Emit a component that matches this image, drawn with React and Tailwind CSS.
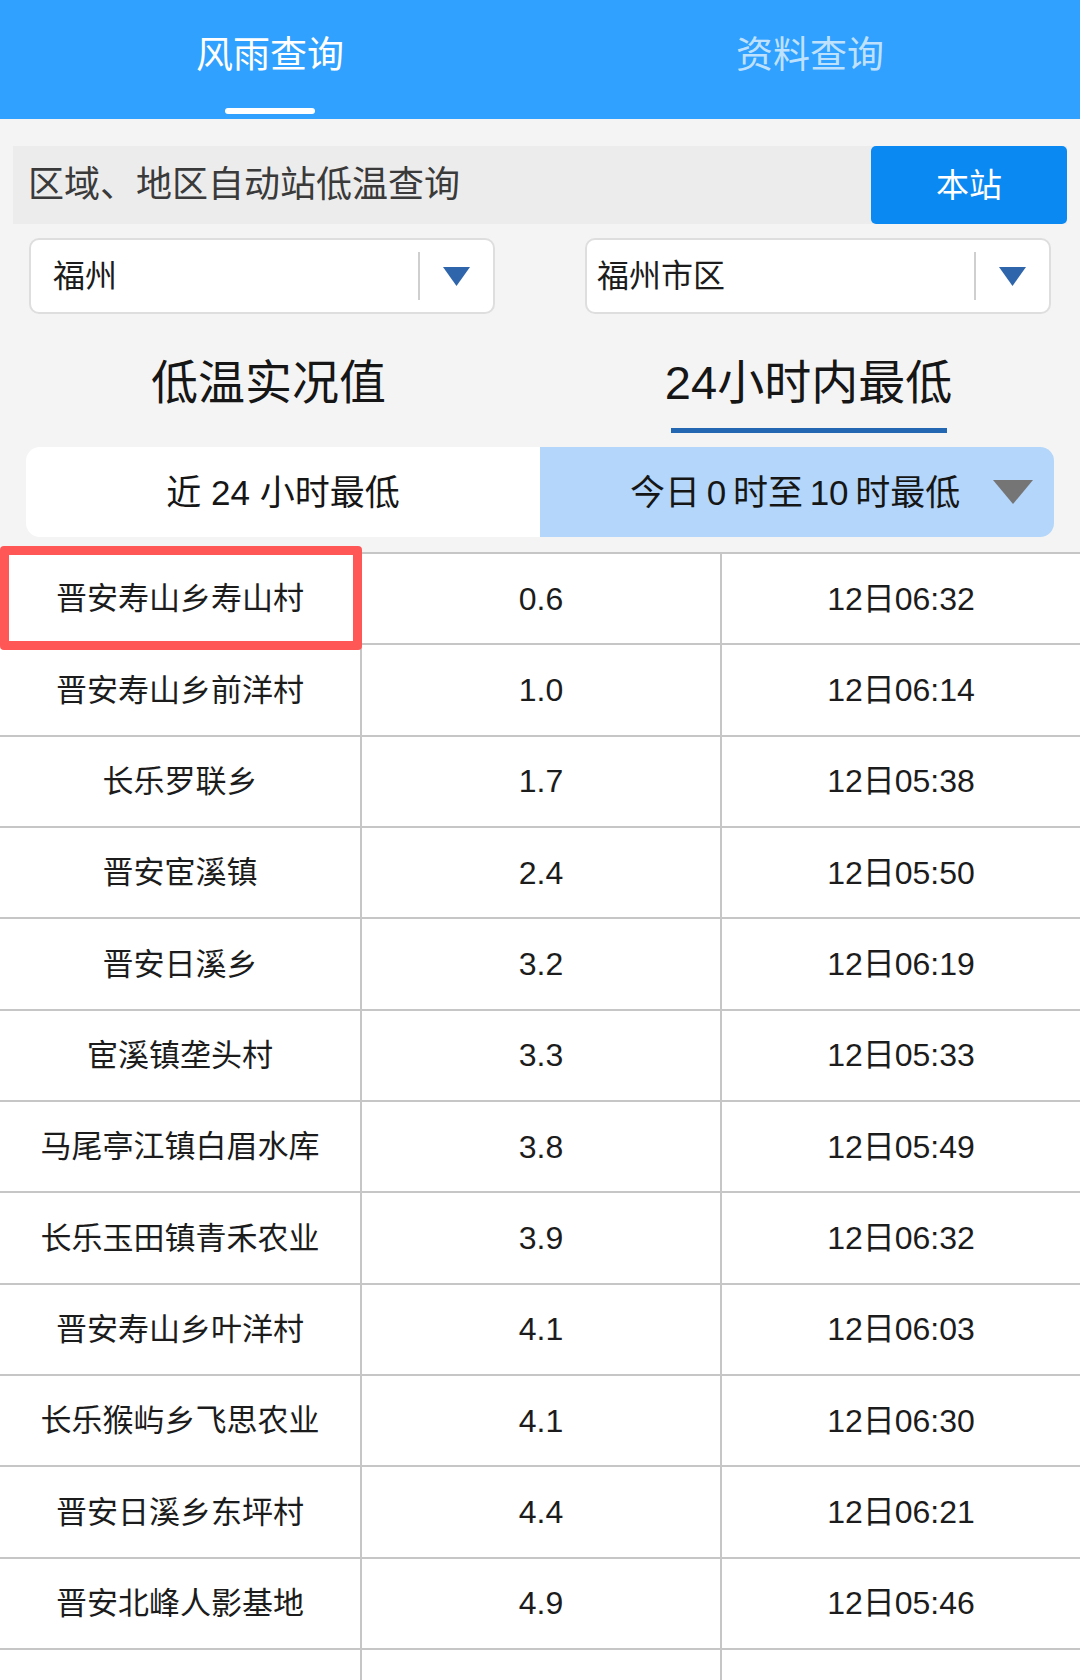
import React from "react";

const rows = [
  ["晋安寿山乡寿山村", "0.6", "12日06:32"],
  ["晋安寿山乡前洋村", "1.0", "12日06:14"],
  ["长乐罗联乡", "1.7", "12日05:38"],
  ["晋安宦溪镇", "2.4", "12日05:50"],
  ["晋安日溪乡", "3.2", "12日06:19"],
  ["宦溪镇垄头村", "3.3", "12日05:33"],
  ["马尾亭江镇白眉水库", "3.8", "12日05:49"],
  ["长乐玉田镇青禾农业", "3.9", "12日06:32"],
  ["晋安寿山乡叶洋村", "4.1", "12日06:03"],
  ["长乐猴屿乡飞思农业", "4.1", "12日06:30"],
  ["晋安日溪乡东坪村", "4.4", "12日06:21"],
  ["晋安北峰人影基地", "4.9", "12日05:46"],
  ["", "", ""],
];

function Dropdown({ label, pad }) {
  return (
    <div className="w-[466px] h-[76px] bg-white border-2 border-[#dedede] rounded-[10px] flex items-center">
      <div className={`flex-1 ${pad} text-[32px] leading-none text-[#1c1c1c]`}>{label}</div>
      <div className="w-[2px] h-[48px] bg-[#cfcfcf]" />
      <div className="w-[73px] flex items-center justify-center">
        <svg width="27" height="19" viewBox="0 0 27 19">
          <polygon points="0,0 27,0 13.5,19" fill="#2f65ab" />
        </svg>
      </div>
    </div>
  );
}

export default function App() {
  return (
    <div className="w-[1080px] h-[1680px] overflow-hidden bg-[#f4f4f4] font-['Liberation_Sans','Noto_Sans_CJK_SC',sans-serif]">
      {/* Header tabs */}
      <div className="h-[119px] bg-[#30a1fe] flex">
        <div className="flex-1 relative flex justify-center pt-[37px]">
          <span className="text-[37px] leading-none text-white">风雨查询</span>
          <div className="absolute bottom-[5px] left-1/2 -translate-x-1/2 w-[90px] h-[6px] rounded-full bg-white" />
        </div>
        <div className="flex-1 flex justify-center pt-[37px]">
          <span className="text-[37px] leading-none text-white/70">资料查询</span>
        </div>
      </div>

      {/* Search bar */}
      <div className="mt-[27px] mx-[13px] h-[78px] bg-[#ececec] flex items-stretch">
        <div className="flex-1 flex items-center pl-[15px] text-[36px] leading-none text-[#3a3a3a]">
          区域、地区自动站低温查询
        </div>
        <div className="w-[196px] bg-[#0a89f2] rounded-[5px] flex items-center justify-center text-white text-[33px] leading-none">
          本站
        </div>
      </div>

      {/* Dropdowns */}
      <div className="mt-[14px] px-[29px] flex justify-between">
        <Dropdown label="福州" pad="pl-[22px]" />
        <Dropdown label="福州市区" pad="pl-[10px]" />
      </div>

      {/* Title tabs */}
      <div className="h-[133px] flex">
        <div className="w-[537px] flex justify-center pt-[45px]">
          <span className="text-[47px] leading-none text-[#161616]">低温实况值</span>
        </div>
        <div className="flex-1 relative flex justify-center pt-[45px]">
          <span className="text-[47px] leading-none text-[#161616]">24小时内最低</span>
          <div className="absolute top-[114px] left-1/2 -translate-x-1/2 w-[276px] h-[5px] bg-[#2366b1]" />
        </div>
      </div>

      {/* Segment */}
      <div className="mx-[26px] h-[90px] rounded-[14px] overflow-hidden flex">
        <div className="w-[514px] bg-white flex items-center justify-center text-[35px] leading-none text-[#161616]">
          近 24 小时最低
        </div>
        <div className="flex-1 bg-[#b3d6fa] flex items-center pl-[90px] pr-[21px]">
          <span className="text-[35px] leading-none text-[#161616] [word-spacing:-3px]">今日 0 时至 10 时最低</span>
          <svg className="ml-auto" width="40" height="24" viewBox="0 0 40 24">
            <polygon points="0,0 40,0 20,24" fill="#757575" />
          </svg>
        </div>
      </div>

      {/* Table */}
      <div className="mt-[15px] relative border-t-2 border-[#c6c6c6]">
        {rows.map((r, i) => (
          <div key={i} className="h-[91.35px] flex border-b-2 border-[#c6c6c6] bg-white">
            <div className="w-[362px] border-r-2 border-[#c6c6c6] flex items-center justify-center text-[31px] leading-none text-[#1c1c1c]">
              {r[0]}
            </div>
            <div className="w-[360px] border-r-2 border-[#c6c6c6] flex items-center justify-center text-[32px] leading-none text-[#1c1c1c]">
              {r[1]}
            </div>
            <div className="flex-1 flex items-center justify-center text-[32px] leading-none text-[#1c1c1c]">
              {r[2]}
            </div>
          </div>
        ))}
        <div className="absolute top-[-8px] left-0 w-[362px] h-[104px] border-[9px] border-[#ff5656] rounded-[4px]" />
      </div>
    </div>
  );
}
